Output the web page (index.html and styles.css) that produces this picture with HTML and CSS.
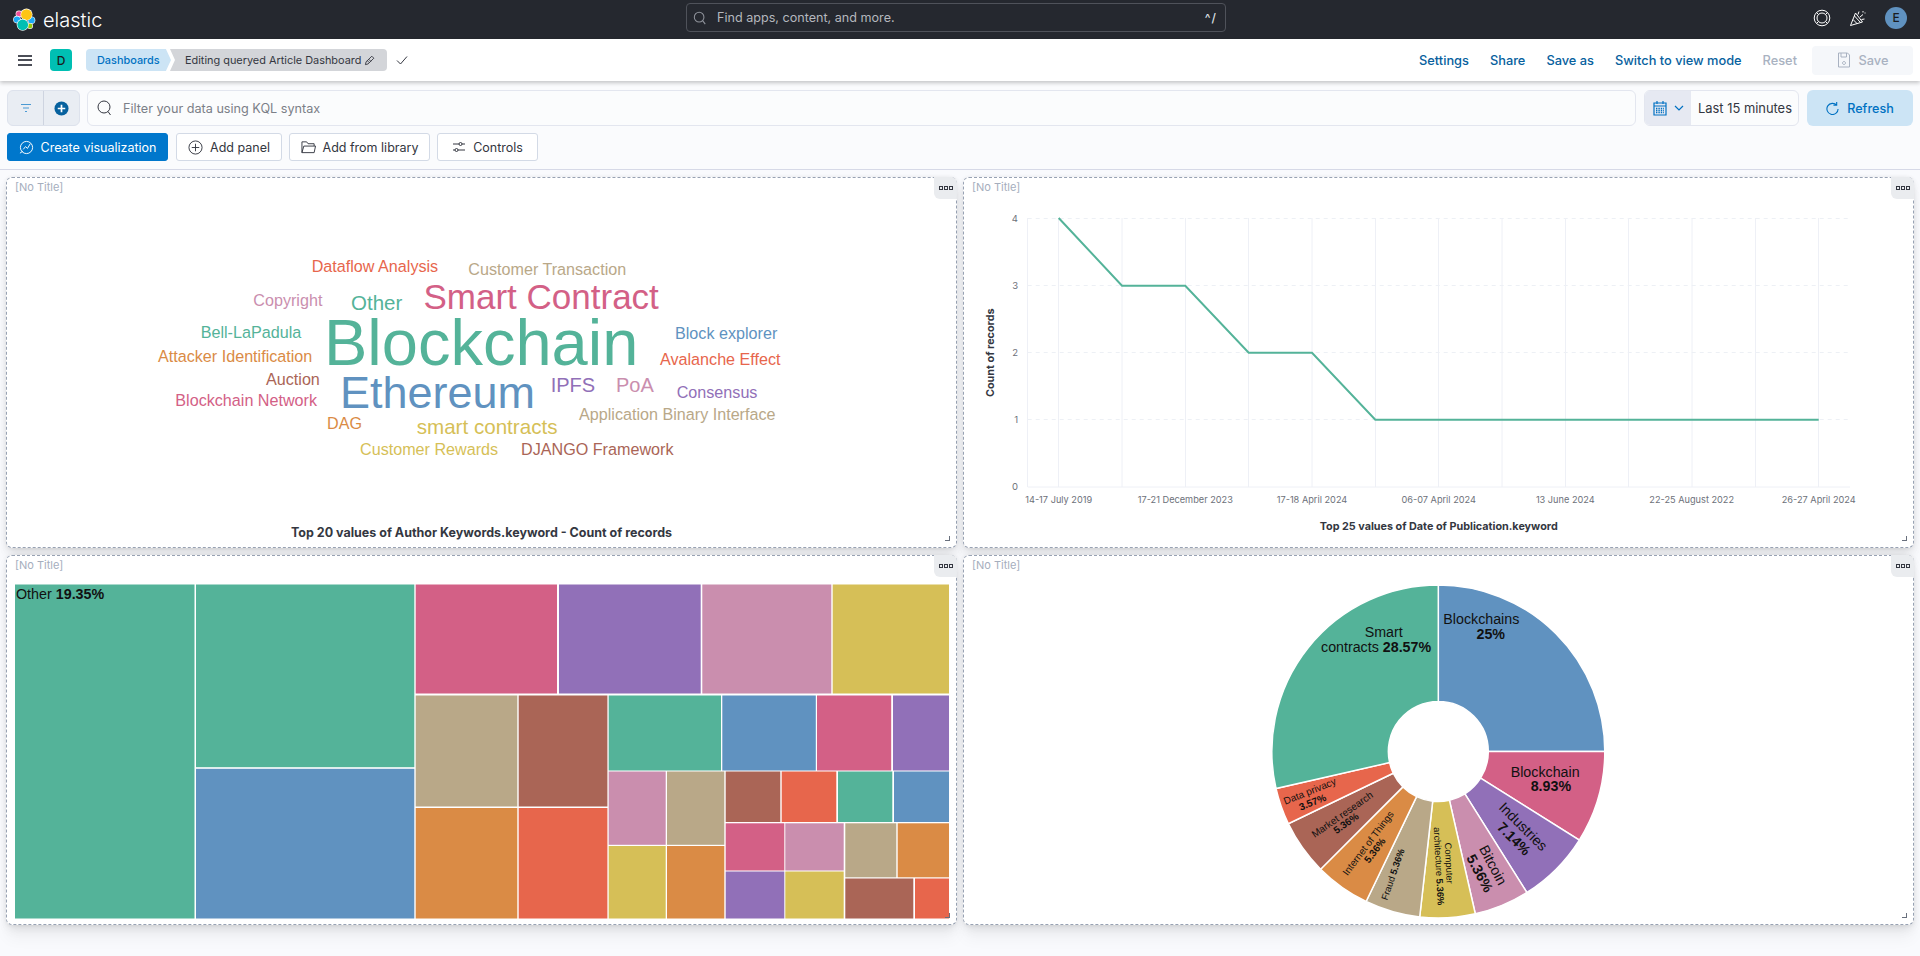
FILE: index.html
```html
<!DOCTYPE html>
<html lang="en">
<head>
<meta charset="utf-8">
<title>Editing queryed Article Dashboard - Elastic</title>
<link rel="stylesheet" href="styles.css">
</head>
<body>
<header class="topbar">
  <div class="brand">
    <svg class="logo" width="24" height="24" viewBox="13 6 24 24">
      <circle class="lg-outline" cx="19" cy="12" r="3.4"/><circle class="lg-pink" cx="19" cy="12" r="2.8"/>
      <circle class="lg-outline" cx="17" cy="17.6" r="3.8"/><circle class="lg-blue" cx="17" cy="17.6" r="3.2"/>
      <circle class="lg-outline" cx="31.5" cy="18.2" r="3.8"/><circle class="lg-blue" cx="31.5" cy="18.2" r="3.2"/>
      <circle class="lg-outline" cx="30" cy="24" r="3"/><circle class="lg-green" cx="30" cy="24" r="2.4"/>
      <circle class="lg-outline" cx="26.5" cy="12.6" r="6"/><circle class="lg-yellow" cx="26.5" cy="12.6" r="5.4"/>
      <circle class="lg-outline" cx="22.7" cy="22.8" r="6"/><circle class="lg-teal" cx="22.7" cy="22.8" r="5.4"/>
    </svg>
    <span class="wordmark">elastic</span>
  </div>
  <div class="global-search">
    <svg class="ic" width="14" height="14" viewBox="0 0 16 16"><circle class="st-grey" cx="7" cy="7" r="5.5"/><path class="st-grey" d="M11 11l3 4"/></svg>
    <span class="global-search-text">Find apps, content, and more.</span>
    <span class="kbd">^/</span>
  </div>
  <div class="top-icons">
    <svg class="ic" width="18" height="18" viewBox="0 0 18 18"><circle class="st-white" cx="9" cy="9" r="7.8"/><circle class="st-white" cx="9" cy="9" r="5"/><path class="st-white" d="M3.5 3.5l2 2M14.5 3.5l-2 2M3.5 14.5l2-2M14.5 14.5l-2-2"/></svg>
    <svg class="ic" width="18" height="18" viewBox="0 0 18 18"><path class="st-white" d="M1.5 16.5L6.5 4l7 9zM4 10.5l4.5 4.5M5.5 7l6 6.5M9 5.5l1-3M11 8l3-2.5M12.5 10.5l3-.5M14 2v1.500M16 3.500v1"/></svg>
    <div class="avatar">E</div>
  </div>
</header>

<nav class="appbar">
  <div class="hamburger"><i></i><i></i><i></i></div>
  <div class="space-badge">D</div>
  <div class="crumbs">
    <span class="crumb crumb-link">Dashboards</span>
    <span class="crumb crumb-current">Editing queryed Article Dashboard
      <svg class="ic" width="11" height="11" viewBox="0 0 12 12"><path class="st-dark" d="M1.5 10.5l.8-3L8.5 1.3l2.200 2.200L4.500 9.700zM3.600 6.200l2.200 2.200M5.200 4.700l2.200 2.200"/></svg>
    </span>
  </div>
  <svg class="ic check" width="14" height="12" viewBox="0 0 14 12"><path class="st-dark" d="M2 6.500l3.500 3.500L12 2.500"/></svg>
  <div class="actions">
    <a class="action">Settings</a>
    <a class="action">Share</a>
    <a class="action">Save as</a>
    <a class="action">Switch to view mode</a>
    <a class="action action-off">Reset</a>
    <div class="save-btn">
      <svg class="ic" width="14" height="16" viewBox="0 0 14 16"><path class="st-off" d="M1.5 1h9l2 2v12h-11zM4 1v4h5.500V1M7 9.500a1.500 1.500 0 1 0 .01 0"/></svg>
      <span>Save</span>
    </div>
  </div>
</nav>

<section class="query">
  <div class="query-row">
    <div class="filter-group">
      <div class="filter-cell filter-cell-a">
        <svg class="ic" width="12" height="10" viewBox="0 0 12 10"><path class="st-lightblue" d="M1 1.500h10M3 5h6M5 8.500h2"/></svg>
      </div>
      <div class="filter-cell">
        <svg class="ic" width="15" height="15" viewBox="0 0 16 16"><circle class="fill-navy" cx="8" cy="8" r="7.500"/><path class="st-whitebold" d="M8 4v8M4 8h8"/></svg>
      </div>
    </div>
    <div class="kql">
      <svg class="ic" width="16" height="16" viewBox="0 0 16 16"><circle class="st-dark" cx="7" cy="7" r="6"/><path class="st-dark" d="M11 11.500l2.500 3.500"/></svg>
      <span class="kql-text">Filter your data using KQL syntax</span>
    </div>
    <div class="date-box">
      <div class="date-icon">
        <svg class="ic" width="14" height="16" viewBox="0 0 14 16"><path class="st-blue" d="M1 3h12v12H1zM4 1v3M10 1v3M1 6h12"/><path class="st-blue-d" d="M3 8.500h8M3 10.500h8M3 12.500h8"/></svg>
        <svg class="ic" width="10" height="6" viewBox="0 0 10 6"><path class="st-blue" d="M1 1l4 4 4-4"/></svg>
      </div>
      <span class="date-text">Last 15 minutes</span>
    </div>
    <div class="refresh">
      <svg class="ic" width="13" height="14" viewBox="0 0 14 14"><path class="st-blue" d="M11.500 4A6 6 0 1 0 13 8M11.500 .5V4H8"/></svg>
      <span>Refresh</span>
    </div>
  </div>
  <div class="tool-row">
    <div class="btn btn-primary btn-create">
      <svg class="ic" width="15" height="15" viewBox="0 0 16 16"><circle class="st-white" cx="8" cy="8" r="6.500"/><path class="st-white" d="M4.500 10l2.500-3 2 2 3-5M1 14l3-2"/></svg>
      <span>Create visualization</span>
    </div>
    <div class="btn btn-panel">
      <svg class="ic" width="15" height="15" viewBox="0 0 16 16"><circle class="st-dark" cx="8" cy="8" r="7"/><path class="st-dark" d="M8 4v8M4 8h8"/></svg>
      <span>Add panel</span>
    </div>
    <div class="btn btn-lib">
      <svg class="ic" width="15" height="14" viewBox="0 0 16 14"><path class="st-dark" d="M1 13V1.500h5l1.500 2H14V6M1 13l2-7h12.500L14 13z"/></svg>
      <span>Add from library</span>
    </div>
    <div class="btn btn-ctl">
      <svg class="ic" width="14" height="12" viewBox="0 0 14 12"><path class="st-dark" d="M1 3h6M10 3h3M1 9h2M6 9h7"/><circle class="st-dark" cx="8.500" cy="3" r="1.500"/><circle class="st-dark" cx="4.500" cy="9" r="1.500"/></svg>
      <span>Controls</span>
    </div>
  </div>
</section>

<main class="grid">
  <article class="panel">
    <div class="panel-title">[No Title]</div>
    <div class="panel-menu"><i></i><i></i><i></i></div>
    <svg class="chart" viewBox="7 200 949 346.500">
      <text class="w" x="311.700" y="272" font-size="16.150" fill="#e7664c">Dataflow Analysis</text>
      <text class="w" x="468.300" y="274.700" font-size="16.150" fill="#b9a888">Customer Transaction</text>
      <text class="w" x="253.300" y="306" font-size="16.150" fill="#ca8eae">Copyright</text>
      <text class="w" x="351" y="310" font-size="20.500" fill="#54b399">Other</text>
      <text class="w" x="423.500" y="309" font-size="35" fill="#d36086">Smart Contract</text>
      <text class="w" x="200.700" y="338" font-size="16.150" fill="#54b399">Bell-LaPadula</text>
      <text class="w" x="675" y="339" font-size="16.150" fill="#6092c0">Block explorer</text>
      <text class="w" x="324" y="365" font-size="65" fill="#54b399">Blockchain</text>
      <text class="w" x="158" y="362" font-size="16.150" fill="#da8b45">Attacker Identification</text>
      <text class="w" x="660" y="365" font-size="16.150" fill="#e7664c">Avalanche Effect</text>
      <text class="w" x="266" y="385" font-size="16.150" fill="#aa6556">Auction</text>
      <text class="w" x="340" y="408" font-size="45" fill="#6092c0">Ethereum</text>
      <text class="w" x="550.700" y="391.700" font-size="20" fill="#9170b8">IPFS</text>
      <text class="w" x="616" y="391.700" font-size="20" fill="#ca8eae">PoA</text>
      <text class="w" x="676.700" y="397.700" font-size="16.150" fill="#9170b8">Consensus</text>
      <text class="w" x="175.300" y="406" font-size="16.150" fill="#d36086">Blockchain Network</text>
      <text class="w" x="579" y="420" font-size="16.150" fill="#b9a888">Application Binary Interface</text>
      <text class="w" x="327" y="429" font-size="16.150" fill="#da8b45">DAG</text>
      <text class="w" x="416.700" y="434" font-size="20.600" fill="#d6bf57">smart contracts</text>
      <text class="w" x="360" y="455" font-size="16.150" fill="#d6bf57">Customer Rewards</text>
      <text class="w" x="521" y="455" font-size="16.150" fill="#aa6556">DJANGO Framework</text>
      <text class="chart-title chart-title-lg" x="481.500" y="537" text-anchor="middle">Top 20 values of Author Keywords.keyword - Count of records</text>
    </svg>
    <div class="resize"></div>
  </article>

  <article class="panel">
    <div class="panel-title">[No Title]</div>
    <div class="panel-menu"><i></i><i></i><i></i></div>
    <svg class="chart" viewBox="964 200 949 346.500">
      <g class="grid-h">
        <path d="M1027.700 218.500H1850M1027.700 285.500H1850M1027.700 352.500H1850M1027.700 419.500H1850"/>
      </g>
      <g class="grid-v">
        <path d="M1027.500 218V487M1058.500 218V487M1122 218V487M1185.500 218V487M1248.500 218V487M1312 218V487M1375.500 218V487M1438.500 218V487M1502 218V487M1565.500 218V487M1628.500 218V487M1692 218V487M1755.500 218V487M1818.500 218V487"/>
        <path d="M1027.700 487H1850"/>
      </g>
      <polyline class="line" points="1058.700,218 1122,285.700 1185.300,285.700 1248.700,352.700 1312,352.700 1375.300,419.700 1818.700,419.700"/>
      <g class="tick-y">
        <text x="1018" y="221.500">4</text><text x="1018" y="289">3</text><text x="1018" y="356">2</text><text x="1018" y="423">1</text><text x="1018" y="490">0</text>
      </g>
      <g class="tick-x">
        <text x="1058.700" y="503">14-17 July 2019</text>
        <text x="1185.300" y="503">17-21 December 2023</text>
        <text x="1312" y="503">17-18 April 2024</text>
        <text x="1438.700" y="503">06-07 April 2024</text>
        <text x="1565.300" y="503">13 June 2024</text>
        <text x="1691.700" y="503">22-25 August 2022</text>
        <text x="1818.700" y="503">26-27 April 2024</text>
      </g>
      <text class="chart-title" transform="rotate(-90 994 352.700)" x="994" y="352.700" text-anchor="middle">Count of records</text>
      <text class="chart-title" x="1438.700" y="530" text-anchor="middle">Top 25 values of Date of Publication.keyword</text>
    </svg>
    <div class="resize"></div>
  </article>

  <article class="panel">
    <div class="panel-title">[No Title]</div>
    <div class="panel-menu"><i></i><i></i><i></i></div>
    <svg class="chart" viewBox="7 577.500 949 346.500">
      <rect x="15" y="584" width="179.500" height="334" fill="#54b399"/>
      <rect x="196" y="584" width="218.300" height="182.700" fill="#54b399"/>
      <rect x="196" y="768.300" width="218.300" height="149.700" fill="#6092c0"/>
      <rect x="415.700" y="584" width="141.300" height="109" fill="#d36086"/>
      <rect x="559" y="584" width="141.700" height="109" fill="#9170b8"/>
      <rect x="702.300" y="584" width="129" height="109" fill="#ca8eae"/>
      <rect x="832.700" y="584" width="116.300" height="109" fill="#d6bf57"/>
      <rect x="415.700" y="695" width="101.600" height="111" fill="#b9a888"/>
      <rect x="415.700" y="807.500" width="101.600" height="110.500" fill="#da8b45"/>
      <rect x="518.700" y="695" width="88.700" height="111" fill="#aa6556"/>
      <rect x="518.700" y="807.500" width="88.700" height="110.500" fill="#e7664c"/>
      <rect x="608.700" y="695" width="112.300" height="75" fill="#54b399"/>
      <rect x="722.300" y="695" width="93.500" height="75" fill="#6092c0"/>
      <rect x="817" y="695" width="74.200" height="75" fill="#d36086"/>
      <rect x="893" y="695" width="56" height="75" fill="#9170b8"/>
      <rect x="608.700" y="771" width="57" height="73.300" fill="#ca8eae"/>
      <rect x="667" y="771" width="57.300" height="73.300" fill="#b9a888"/>
      <rect x="608.700" y="845.500" width="57" height="72.500" fill="#d6bf57"/>
      <rect x="667" y="845.500" width="57.300" height="72.500" fill="#da8b45"/>
      <rect x="725.700" y="771" width="54.600" height="50.500" fill="#aa6556"/>
      <rect x="781.700" y="771" width="54.600" height="50.500" fill="#e7664c"/>
      <rect x="838" y="771" width="54.300" height="50.500" fill="#54b399"/>
      <rect x="894" y="771" width="55" height="50.500" fill="#6092c0"/>
      <rect x="725.700" y="822.800" width="58.600" height="47.200" fill="#d36086"/>
      <rect x="785.300" y="822.800" width="58.400" height="47.200" fill="#ca8eae"/>
      <rect x="725.700" y="871" width="58.600" height="47" fill="#9170b8"/>
      <rect x="785.300" y="871" width="58.400" height="47" fill="#d6bf57"/>
      <rect x="845.300" y="822.800" width="51" height="54" fill="#b9a888"/>
      <rect x="897.700" y="822.800" width="51.300" height="54" fill="#da8b45"/>
      <rect x="845.300" y="878" width="68" height="40" fill="#aa6556"/>
      <rect x="915" y="878" width="34" height="40" fill="#e7664c"/>
      <text class="pie-label" x="16" y="598" font-size="14.300">Other <tspan class="b">19.35%</tspan></text>
    </svg>
    <div class="resize"></div>
  </article>

  <article class="panel">
    <div class="panel-title">[No Title]</div>
    <div class="panel-menu"><i></i><i></i><i></i></div>
    <svg class="chart" viewBox="964 577.500 949 346.500">
      <g class="pie" transform="translate(1438.300 751)">
        <path fill="#6092c0" d="M0 -50L0 -166.500A166.500 166.500 0 0 1 166.500 0L50 0A50 50 0 0 0 0 -50Z"/>
        <path fill="#d36086" d="M50 0L166.500 0A166.500 166.500 0 0 1 141 88.600L42.300 26.600A50 50 0 0 0 50 0Z"/>
        <path fill="#9170b8" d="M42.300 26.600L141 88.600A166.500 166.500 0 0 1 88.600 141L26.600 42.300A50 50 0 0 0 42.300 26.600Z"/>
        <path fill="#ca8eae" d="M26.600 42.300L88.600 141A166.500 166.500 0 0 1 37 162.300L11.100 48.700A50 50 0 0 0 26.600 42.300Z"/>
        <path fill="#d6bf57" d="M11.100 48.700L37 162.300A166.500 166.500 0 0 1 -18.600 165.500L-5.600 49.700A50 50 0 0 0 11.100 48.700Z"/>
        <path fill="#b9a888" d="M-5.600 49.700L-18.600 165.500A166.500 166.500 0 0 1 -72.200 150L-21.700 45.100A50 50 0 0 0 -5.600 49.700Z"/>
        <path fill="#da8b45" d="M-21.700 45.100L-72.200 150A166.500 166.500 0 0 1 -117.700 117.700L-35.400 35.400A50 50 0 0 0 -21.700 45.100Z"/>
        <path fill="#aa6556" d="M-35.400 35.400L-117.700 117.700A166.500 166.500 0 0 1 -150 72.200L-45.100 21.700A50 50 0 0 0 -35.400 35.400Z"/>
        <path fill="#e7664c" d="M-45.100 21.700L-150 72.200A166.500 166.500 0 0 1 -162.300 37L-48.700 11.100A50 50 0 0 0 -45.100 21.700Z"/>
        <path fill="#54b399" d="M-48.700 11.100L-162.300 37A166.500 166.500 0 0 1 0 -166.500L0 -50A50 50 0 0 0 -48.700 11.100Z"/>
      </g>
      <g class="pie-label" font-size="14.250">
        <text x="1443.300" y="623.300">Blockchains</text>
        <text class="b" x="1476.500" y="638">25%</text>
        <text x="1383.700" y="636.700" text-anchor="middle">Smart</text>
        <text x="1321" y="651.700">contracts <tspan class="b">28.57%</tspan></text>
        <text x="1510.700" y="776.700">Blockchain</text>
        <text class="b" x="1530.700" y="790.700">8.93%</text>
        <text text-anchor="middle" transform="rotate(45 1519.800 829.500)" x="1519.800" y="829.500">Industries</text>
        <text class="b" text-anchor="middle" transform="rotate(45 1510.500 841.800)" x="1510.500" y="841.800">7.14%</text>
        <text text-anchor="middle" transform="rotate(62 1488.700 866.900)" x="1488.700" y="866.900">Bitcoin</text>
        <text class="b" text-anchor="middle" transform="rotate(62 1475.400 875.200)" x="1475.400" y="875.200">5.36%</text>
      </g>
      <g class="pie-label" font-size="9.400">
        <text text-anchor="middle" transform="rotate(87 1445.700 862.900)" x="1445.700" y="862.900">Computer</text>
        <text text-anchor="middle" transform="rotate(87 1435.700 865.900)" x="1435.700" y="865.900">architecture <tspan class="b">5.36%</tspan></text>
        <text text-anchor="middle" transform="rotate(-71 1395.900 874.900)" x="1395.900" y="874.900">Fraud <tspan class="b">5.36%</tspan></text>
      </g>
      <g class="pie-label" font-size="10">
        <text text-anchor="middle" transform="rotate(-53 1370.900 844.700)" x="1370.900" y="844.700">Internet of Things</text>
        <text class="b" text-anchor="middle" transform="rotate(-53 1377.600 852)" x="1377.600" y="852">5.36%</text>
        <text text-anchor="middle" transform="rotate(-35 1344.300 816.800)" x="1344.300" y="816.800">Market research</text>
        <text class="b" text-anchor="middle" transform="rotate(-35 1348 825.500)" x="1348" y="825.500">5.36%</text>
        <text text-anchor="middle" transform="rotate(-22 1311.100 793.900)" x="1311.100" y="793.900">Data privacy</text>
        <text class="b" text-anchor="middle" transform="rotate(-22 1313.800 804.900)" x="1313.800" y="804.900">3.57%</text>
      </g>
    </svg>
    <div class="resize"></div>
  </article>
</main>
</body>
</html>
```
FILE: styles.css
```css
* { box-sizing: border-box; }
html, body { margin: 0; height: 956px; overflow: hidden; }
body {
  background: #f9fafd;
  font-family: Inter, "Liberation Sans", sans-serif;
  font-size: 14px;
  color: #343741;
}
.ic { display: block; flex: none; fill: none; }

/* stroke icons */
.st-grey { fill: none; stroke: #8f939b; stroke-width: 1.2; }
.st-white { fill: none; stroke: #fff; stroke-width: 1; }
.st-whitebold { fill: none; stroke: #fff; stroke-width: 1.8; }
.st-dark { fill: none; stroke: #343741; stroke-width: 1; }
.st-off { fill: none; stroke: #a9b2c1; stroke-width: 1; }
.st-blue { fill: none; stroke: #0071c2; stroke-width: 1.2; }
.st-blue-d { fill: none; stroke: #0071c2; stroke-width: 1.4; stroke-dasharray: 1.4 1; }
.st-lightblue { fill: none; stroke: #4b9ad3; stroke-width: 1.2; }
.fill-navy { fill: #07619e; }

/* logo */
.lg-outline { fill: #fff; }
.lg-pink { fill: #f04e98; }
.lg-blue { fill: #1ba9f5; }
.lg-green { fill: #93c90e; }
.lg-yellow { fill: #fec514; }
.lg-teal { fill: #00bfb3; }

/* top bar */
.topbar {
  height: 39px;
  background: #25282f;
  display: flex;
  align-items: center;
  position: relative;
  padding: 0 14px 0 13px;
}
.brand { display: flex; align-items: center; gap: 6px; width: 673px; }
.wordmark { color: #fff; font-size: 20px; font-weight: 300; line-height: 24px; }
.global-search {
  width: 540px;
  height: 29px;
  margin-top: -4px;
  border: 1px solid #4f525a;
  border-radius: 4px;
  display: flex;
  align-items: center;
  padding: 0 8px 0 6px;
  gap: 10px;
  color: #c3c6cc;
}
.global-search-text { flex: 1; font-size: 12.600px; color: #b4b7bd; }
.kbd { color: #dfe1e5; font-size: 12px; font-weight: 500; letter-spacing: 1px; }
.top-icons { margin-left: auto; display: flex; align-items: center; gap: 18px; margin-top: -4px; margin-right: -1px; }
.avatar {
  width: 22px; height: 22px; border-radius: 50%;
  background: #6092c0; color: #1a1c21;
  display: flex; align-items: center; justify-content: center;
  font-size: 12px; font-weight: 500;
}

/* app bar */
.appbar {
  height: 42px;
  background: #fff;
  box-shadow: 0 2px 4px rgba(0, 0, 0, .22);
  display: flex;
  align-items: center;
  padding: 0 7px 0 18px;
  position: relative;
}
.hamburger { width: 14px; display: flex; flex-direction: column; gap: 2.500px; }
.hamburger i { display: block; height: 2px; background: #4b4e57; }
.space-badge {
  width: 22px; height: 22px; margin-left: 18px; border-radius: 4px;
  background: #00bfb3; color: #1a1c21;
  display: flex; align-items: center; justify-content: center;
  font-size: 12px; font-weight: 500;
}
.crumbs { display: flex; margin-left: 14px; height: 22px; font-size: 10.900px; }
.crumb { display: flex; align-items: center; line-height: 22px; }
.crumb-link {
  width: 85px; padding-left: 11px; color: #0071c2; font-weight: 500; background: #cce4f5;
  border-radius: 4px 0 0 4px;
  clip-path: polygon(0 0, 94% 0, 100% 50%, 94% 100%, 0 100%);
}
.crumb-current {
  width: 217px; padding-left: 15px; gap: 3px; margin-left: -1px; color: #343741; background: #d3d5d9;
  border-radius: 0 4px 4px 0;
  clip-path: polygon(0 0, 100% 0, 100% 100%, 0 100%, 2.300% 50%);
}
.check { margin-left: 8px; }
.actions { margin-left: auto; display: flex; align-items: center; gap: 21px; font-weight: 500; font-size: 12.800px; }
.action { color: #07619e; }
.action-off { color: #a9b2c1; }
.save-btn {
  width: 101px; height: 29px; margin-left: -6px; border-radius: 4px; background: #f5f7fa; color: #a9b2c1;
  display: flex; align-items: center; justify-content: center; gap: 8px;
}

/* query bar */
.query {
  height: 89px;
  padding: 9px 7px 0;
  border-bottom: 1px solid #d6d9e7;
  background: #fafbfd;
}
.query-row { display: flex; height: 36px; }
.filter-group {
  width: 73px; display: flex;
  background: #e9edf3; border: 1px solid #dde2ec; border-radius: 6px;
}
.filter-cell { flex: 1; display: flex; align-items: center; justify-content: center; }
.filter-cell-a { border-right: 1px solid #ced4e0; }
.kql {
  flex: 1; margin-left: 7px; display: flex; align-items: center; gap: 9px; padding-left: 9px;
  background: #fbfcfd; border: 1px solid #e3e6ef; border-radius: 6px;
}
.kql-text { font-size: 12.650px; color: #7b7f88; padding-left: 1px; }
.date-box {
  width: 155px; margin-left: 8px; display: flex; align-items: center;
  background: #fbfcfd; border: 1px solid #e3e6ef; border-radius: 6px; overflow: hidden;
}
.date-icon {
  width: 46px; height: 100%; background: #e6e9f2; display: flex; align-items: center;
  justify-content: center; gap: 7px;
}
.date-text { margin-left: 7px; font-size: 12.900px; }
.refresh {
  width: 106px; margin-left: 8px; border-radius: 6px; background: #cce4f5; color: #0071c2;
  display: flex; align-items: center; justify-content: center; gap: 8px; font-weight: 500; font-size: 12.600px;
}
.tool-row { display: flex; margin-top: 7px; height: 28px; gap: 7px; }
.btn {
  display: flex; align-items: center; justify-content: center; gap: 7px; border-radius: 3px;
  font-size: 12.500px; background: #fff; border: 1px solid #d3dae6;
}
.btn-primary { background: #0077cc; border-color: #0077cc; color: #fff; }
.btn-create { width: 161px; margin-right: 1px; }
.btn-panel { width: 106px; }
.btn-lib { width: 141px; }
.btn-ctl { width: 101px; }

/* dashboard */
.grid {
  display: grid;
  grid-template-columns: 951px 951px;
  grid-template-rows: 370.500px 370.500px;
  gap: 7px 6px;
  padding: 7px 6px 0;
}
.panel {
  position: relative;
  display: flex;
  flex-direction: column;
  background: #fff;
  border: 1px dashed #98a2b3;
  border-radius: 6px;
  box-shadow: 0 .9px 4px -1px rgba(0, 0, 0, .08), 0 2.600px 8px -1px rgba(0, 0, 0, .06), 0 5.700px 12px -1px rgba(0, 0, 0, .05), 0 15px 15px -1px rgba(0, 0, 0, .04);
}
.panel-title {
  height: 22px; flex: none; padding: 2px 0 0 8px;
  font-size: 11px; line-height: 14px; color: #a5aebd;
}
.panel-menu {
  position: absolute; top: -1px; right: -1px;
  width: 23px; height: 22px;
  background: #eaecef; border-radius: 0 6px 0 6px;
  display: flex; align-items: center; justify-content: center; gap: 1px;
}
.panel-menu i { display: block; width: 4px; height: 4px; border: 1px solid #343741; }
.resize {
  position: absolute; right: 6px; bottom: 6px; width: 5px; height: 5px;
  border-right: 1.500px solid #69707d; border-bottom: 1.500px solid #69707d;
}
.chart { display: block; width: 949px; height: 346.500px; flex: none; }

/* chart text */
.w { font-family: "Liberation Sans", Arial, sans-serif; }
.chart-title { font-family: Inter, sans-serif; font-size: 10.800px; font-weight: 700; fill: #343741; }
.chart-title-lg { font-size: 12.500px; }
.tick-y text { font-family: Inter, sans-serif; font-size: 9.500px; fill: #6d717a; text-anchor: end; }
.tick-x text { font-family: Inter, sans-serif; font-size: 9.200px; fill: #6d717a; text-anchor: middle; }
.grid-h path { fill: none; stroke: #edf0f5; stroke-width: 1; stroke-dasharray: 4 4; }
.grid-v path { fill: none; stroke: #eef0f6; stroke-width: 1; }
.line { fill: none; stroke: #54b399; stroke-width: 2; }
.pie path { stroke: #fff; stroke-width: 1.500; }
.pie-label { font-family: "Liberation Sans", Arial, sans-serif; fill: #111; }
.b { font-weight: 700; }
```
